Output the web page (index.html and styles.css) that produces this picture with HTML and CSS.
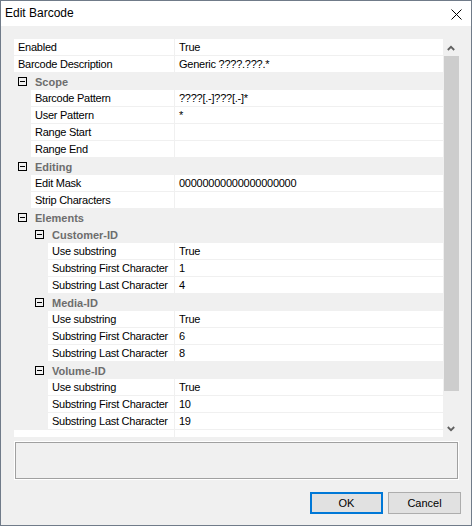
FILE: index.html
```html
<!DOCTYPE html>
<html>
<head>
<meta charset="utf-8">
<title>Edit Barcode</title>
<link rel="stylesheet" href="styles.css">
</head>
<body>
<div class="window">
  <div class="titlebar">
    <span class="title">Edit Barcode</span>
    <svg class="close" width="11" height="11" viewBox="0 0 11 11"><path d="M0.5 0.5 L10.5 10.5 M10.5 0.5 L0.5 10.5" stroke="#000" stroke-width="1" fill="none"/></svg>
  </div>
  <div class="content">
    <div class="grid">
      <div class="rows">
        <div class="row l0"><span class="name">Enabled</span><span class="value">True</span></div>
        <div class="row l0"><span class="name">Barcode Description</span><span class="value">Generic ????.???.*</span></div>
        <div class="cat l0"><span class="box"></span><span class="cat-name">Scope</span></div>
        <div class="row l1"><span class="name">Barcode Pattern</span><span class="value">????[.-]???[.-]*</span></div>
        <div class="row l1"><span class="name">User Pattern</span><span class="value">*</span></div>
        <div class="row l1"><span class="name">Range Start</span><span class="value"></span></div>
        <div class="row l1"><span class="name">Range End</span><span class="value"></span></div>
        <div class="cat l0"><span class="box"></span><span class="cat-name">Editing</span></div>
        <div class="row l1"><span class="name">Edit Mask</span><span class="value">00000000000000000000</span></div>
        <div class="row l1"><span class="name">Strip Characters</span><span class="value"></span></div>
        <div class="cat l0"><span class="box"></span><span class="cat-name">Elements</span></div>
        <div class="cat l1"><span class="box"></span><span class="cat-name">Customer-ID</span></div>
        <div class="row l2"><span class="name">Use substring</span><span class="value">True</span></div>
        <div class="row l2"><span class="name">Substring First Character</span><span class="value">1</span></div>
        <div class="row l2"><span class="name">Substring Last Character</span><span class="value">4</span></div>
        <div class="cat l1"><span class="box"></span><span class="cat-name">Media-ID</span></div>
        <div class="row l2"><span class="name">Use substring</span><span class="value">True</span></div>
        <div class="row l2"><span class="name">Substring First Character</span><span class="value">6</span></div>
        <div class="row l2"><span class="name">Substring Last Character</span><span class="value">8</span></div>
        <div class="cat l1"><span class="box"></span><span class="cat-name">Volume-ID</span></div>
        <div class="row l2"><span class="name">Use substring</span><span class="value">True</span></div>
        <div class="row l2"><span class="name">Substring First Character</span><span class="value">10</span></div>
        <div class="row l2"><span class="name">Substring Last Character</span><span class="value">19</span></div>
        <div class="row l0"><span class="name"></span><span class="value"></span></div>
      </div>
      <div class="scrollbar">
        <div class="sb-btn"><svg width="8" height="6" viewBox="0 0 8 6"><polyline points="0.8,5 4,1.8 7.2,5" fill="none" stroke="#606060" stroke-width="1.8"/></svg></div>
        <div class="thumb"></div>
        <div class="sb-space"></div>
        <div class="sb-btn"><svg width="8" height="6" viewBox="0 0 8 6"><polyline points="0.8,1 4,4.2 7.2,1" fill="none" stroke="#606060" stroke-width="1.8"/></svg></div>
      </div>
    </div>
    <div class="desc"><div class="desc-inner"></div></div>
    <div class="footer">
      <button class="btn btn-default">OK</button>
      <button class="btn">Cancel</button>
    </div>
  </div>
</div>
</body>
</html>
```
FILE: styles.css
```css
* { box-sizing: border-box; }
html, body { margin: 0; padding: 0; background: #f0f0f0; }
body { font-family: "Liberation Sans", Arial, sans-serif; font-size: 11px; color: #000; }

.window {
  width: 472px;
  height: 526px;
  border: 1px solid #707b89;
  background: #f0f0f0;
  display: flex;
  flex-direction: column;
}

.titlebar {
  height: 25px;
  background: #fff;
  display: flex;
  align-items: center;
  justify-content: space-between;
  padding: 0 9px 0 4px;
}
.title { font-size: 12px; line-height: 25px; }
.close { display: block; margin-top: 1px; }

.content { padding: 13px 10px 0 13px; }

.grid { display: flex; width: 445px; height: 398px; }
.rows { width: 429px; height: 398px; overflow: hidden; }

.row {
  display: flex;
  height: 17px;
  border-bottom: 1px solid #f0f0f0;
  background: #f0f0f0;
  line-height: 16px;
  white-space: nowrap;
  letter-spacing: -0.25px;
}
.row .name { background: #fff; padding-left: 4px; width: 160px; }
.row .value { background: #fff; margin-left: 1px; flex: 1; padding-left: 4px; }
.row.l1 { padding-left: 17px; }
.row.l1 .name { width: 143px; }
.row.l2 { padding-left: 34px; }
.row.l2 .name { width: 126px; }

.cat {
  display: flex;
  align-items: center;
  height: 17px;
  background: #f0f0f0;
  padding-left: 4px;
  line-height: 16px;
  white-space: nowrap;
}
.cat.l1 { padding-left: 21px; }
.box {
  width: 9px;
  height: 9px;
  border: 1px solid #000;
  margin-right: 8px;
  margin-top: -1px;
  display: flex;
  align-items: center;
  justify-content: center;
}
.box::after { content: ""; width: 5px; height: 1px; background: #000; }
.cat-name { font-weight: bold; color: #6d6d6d; font-size: 11px; }

.scrollbar {
  width: 16px;
  display: flex;
  flex-direction: column;
  background: #f0f0f0;
}
.sb-btn { height: 17px; display: flex; align-items: center; justify-content: center; padding-right: 1px; }
.sb-btn svg { display: block; }
.thumb { height: 335px; background: #cdcdcd; width: 15px; margin-left: 1px; }
.sb-space { flex: 1; }

.desc { margin-top: 4px; width: 445px; height: 39px; border: 1px solid #fff; }
.desc-inner { height: 100%; border: 1px solid #a0a0a0; background: #f0f0f0; }

.footer { display: flex; justify-content: flex-end; gap: 5px; margin-top: 12px; }
.btn {
  width: 73px;
  height: 22px;
  background: #e1e1e1;
  border: 1px solid #adadad;
  font-family: "Liberation Sans", Arial, sans-serif;
  font-size: 11px;
  color: #000;
  padding: 0;
  margin: 0;
}
.btn-default { border: 2px solid #0078d7; }
```
